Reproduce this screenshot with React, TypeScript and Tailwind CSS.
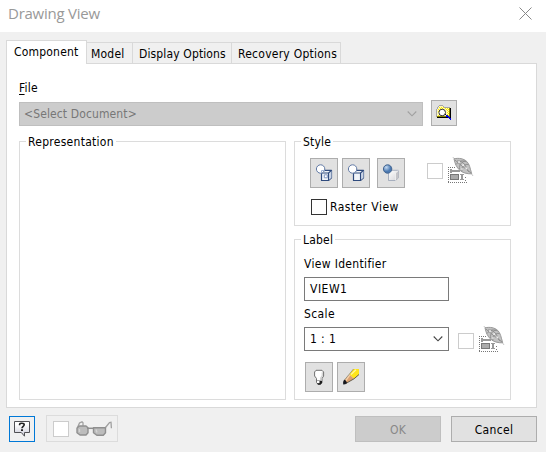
import type { ReactNode } from 'react';

function Group({ title, className, titleClass = 'tracking-[0.2px]', children }: { title: string; className: string; titleClass?: string; children?: ReactNode }) {
  return (
    <fieldset className={`min-w-0 border border-[#dcdcdc] ${className}`}>
      <legend className={`ml-[6px] h-4 px-[2px] leading-[18px] ${titleClass}`}>{title}</legend>
      {children}
    </fieldset>
  );
}

function ToolButton({ label, className, children }: { label: string; className: string; children: ReactNode }) {
  return (
    <button aria-label={label} className={`flex shrink-0 items-center justify-center border border-[#adadad] bg-[#e1e1e1] ${className}`}>
      {children}
    </button>
  );
}

function Check({ disabled = false }: { disabled?: boolean }) {
  return <span role="checkbox" aria-checked="false" className={`size-4 shrink-0 border bg-white ${disabled ? 'border-[#cccccc]' : 'border-[#333333]'}`} />;
}

function Chevron({ color }: { color: string }) {
  return (
    <svg width="10" height="6" viewBox="0 0 10 6" fill="none" stroke={color} strokeWidth="1.1">
      <path d="M.7.5 5 4.8 9.3.5" />
    </svg>
  );
}

function BrowseIcon() {
  return (
    <svg width="16" height="16" viewBox="0 0 16 16" shapeRendering="crispEdges">
      <path d="M1 3h2V1h5v1h6v10H1z" fill="#fff9b8" />
      <path d="M3 2h1v1H3zm2 0h1v1H5zm2 0h1v1H7zM4 3h1v1H4zm2 0h1v1H6zm3 0h1v1H9zm2 0h1v1h-1zm-1 1h1v1h-1zm2 0h1v1h-1zm-1 1h1v1h-1zm1 1h1v1h-1zm-1 1h1v1h-1zm1 1h1v1h-1zm-1 1h1v1h-1zm1 1h1v1h-1zM2 4h1v1H2zm0 2h1v1H2zm0 4h1v1H2zm2 1h1v1H4z" fill="#ffee00" />
      <path d="M0 12V4h1V2h1V1h1V0h4v1h1v1h6v1H8V2H7V1H3v1H2v2H1v8z" fill="#a5a5a5" />
      <path d="M13 3h1v9h-1zM1 11h12v1H1z" fill="#8b8600" />
      <path d="M14 3h1v10H1v-1h13z" fill="#000" />
      <circle cx="6.2" cy="7.5" r="3.3" fill="#fff" stroke="#333" shapeRendering="auto" />
      <path d="M9 9h1v1H9z" fill="#111" />
      <path d="M10 10h2v1h1v1h1v1h1v2h-1v-1h-1v-1h-1v-1h-2z" fill="#0000e8" />
    </svg>
  );
}

function StyleIcon({ hidden = false, shaded = false }: { hidden?: boolean; shaded?: boolean }) {
  const edge = shaded ? '#8d98ae' : '#2f4a7d';
  return (
    <svg width="18" height="18" viewBox="0 0 18 18">
      <defs>
        <radialGradient id="ball" cx="35%" cy="30%">
          <stop offset="0" stopColor="#c4daf2" />
          <stop offset="1" stopColor="#4b79b1" />
        </radialGradient>
        <linearGradient id="box" x2="1" y2="1">
          <stop stopColor="#fff" />
          <stop offset="1" stopColor="#d4d4d8" />
        </linearGradient>
      </defs>
      <path d="M6.5 8.5 9 6.3h7.5v7.5l-3 2.7h-7z" fill={shaded ? 'url(#box)' : '#f1f4f9'} stroke={edge} strokeWidth={shaded ? 0.7 : 1.2} strokeLinejoin="round" />
      <path d="M13.5 9v7.3l3-2.6V6.5z" fill={shaded ? '#c4c4c8' : '#cbd5e6'} />
      <path d="M6.5 9h7v7.5m0-7.5 3-2.6" fill="none" stroke={shaded ? '#f3f3f3' : edge} strokeWidth={shaded ? 0.8 : 1.1} />
      {hidden && <path d="M9.3 10.8v3h3v-3z" fill="#fff" stroke="#8298c2" />}
      <circle cx="5.6" cy="5" r="4.2" fill={shaded ? 'url(#ball)' : '#fff'} stroke={shaded ? '#43648f' : '#6079a5'} />
      {hidden && <path d="M6.5 9V6.5h3" fill="none" stroke="#9eb1d2" />}
    </svg>
  );
}

function InheritIcon() {
  return (
    <svg width="26" height="27" viewBox="0 0 26 27" className="shrink-0">
      <g fill="none" stroke="#777" strokeDasharray="1 1" shapeRendering="crispEdges">
        <path d="M0 10.5h7M0 25.5h19M.5 10v16M17 20.5h2M17 23.5h2" />
      </g>
      <g shapeRendering="crispEdges">
        <path d="M2 12h2v1h8v2H4v1H2z" fill="#999" />
        <rect x="2.5" y="17.5" width="8" height="5" fill="#aaa" stroke="#777" />
        <path d="M12 17h4v1h-1v4h1v1h-4v-1h1v-4h-1z" fill="#999" />
      </g>
      <path d="M4.8 0 6.5 2M23 16l2 3" stroke="#c8c8c8" />
      <path d="M6 1.8C11 .8 15.5 1.5 18.8 4.5 21.5 7 22 11 23.7 16.8 19 17 14.5 15.8 11.8 13.2 8.5 10.3 7 7 6 1.8z" fill="#c2c2c2" stroke="#9a9a9a" />
      <path d="M7 3c4 4 11 9 16 13M8 7.5c3-4 7-4.5 10.5-2.5M11.5 12c-.5-4 2-7.5 6-8M14 14.5c-1-4 2-8 6.5-7M9 4c3-.5 6 1 8 4s2 5 4 7" fill="none" stroke="#8b8b8b" strokeWidth=".9" />
      <path d="M10 4.2h2v1.6h-2zm4.3 3h1.8V9h-1.8zm3.2 3.4h1.8v1.8h-1.8zm-4.4.6h1.5v1.6h-1.5z" fill="#ececec" />
    </svg>
  );
}

function BulbIcon() {
  return (
    <svg width="12" height="17" viewBox="0 0 12 17">
      <path d="M3 1.3h6L10.6 3v4L9 9.5v4L7.7 15H4.8l-1.3-1.5v-4L1.6 7V3z" fill="#fff" stroke="#707070" strokeLinejoin="round" />
      <path d="M9.3 3.2v3.5L7.6 9.3v2" fill="none" stroke="#d2d2d2" strokeWidth="1.3" />
      <path d="M4 11.5h4.5" stroke="#aaa" />
      <path d="M6.5 12H9v2l-1.6 1.8H5L4 14.3h2.5z" fill="#1d1d1d" />
    </svg>
  );
}

function PencilIcon() {
  return (
    <svg width="18" height="18" viewBox="0 0 18 18">
      <path d="M11.5 1H17v5.5l-5 4.3-4.7-4.4z" fill="#ffe51a" />
      <path d="m7.3 6.4 4.7 4.4L4 15.2 2 12.8z" fill="#dba06f" />
      <path d="M7.7 7.2 3.5 13" fill="none" stroke="#f7d1a8" strokeWidth="1.3" />
      <path d="M17 6.5 12 10.8 4 15.4" fill="none" stroke="#5b5442" strokeWidth=".9" />
      <path d="M11.5 1 7.2 6.3 2 12.5" fill="none" stroke="#8e8874" strokeWidth=".8" />
      <path d="m9 6.5 5-4.8" stroke="#fff9a0" strokeWidth="1.2" />
      <path d="m2.2 11.8 1.6.7 1.3 2.4-1.8 1.3-2.1.2-.1-2.3z" fill="#16181f" />
    </svg>
  );
}

function HelpIcon() {
  return (
    <svg width="18" height="18" viewBox="0 0 18 18">
      <defs>
        <linearGradient id="bubble" x2="0" y2="1">
          <stop offset=".2" stopColor="#fff" />
          <stop offset="1" stopColor="#c9c9d6" />
        </linearGradient>
      </defs>
      <path d="M1.5 1.5h15v11h-5v3.7l-3.2-3.7H1.5z" fill="url(#bubble)" stroke="#505054" />
      <path d="M6.6 5.2V4.4c0-.8.8-1.2 2.2-1.2s2.4.5 2.4 1.6C11.2 6.3 9 6.4 9 8.2" fill="none" stroke="#222" strokeWidth="1.6" />
      <path d="M8 9.3h2v1.8H8z" fill="#222" />
    </svg>
  );
}

function GlassesIcon() {
  return (
    <svg width="36" height="16" viewBox="0 0 36 16">
      <path d="M1.5 6.5 3.5 2 6 .8l1 1v3M29.5 6.5l4-5 1.5-.3.4 6" fill="none" stroke="#a0a0a0" strokeWidth="1.3" />
      <path d="M1 7 3.5 5H10l2 1.7v5L10 14H4L1 11.8zM17.5 6.7h12v5L27.3 14.2h-6.5l-3.3-2.5z" fill="#bcbcbc" stroke="#8f8f8f" strokeWidth="1.4" strokeLinejoin="round" />
      <path d="M11 7.3h7" stroke="#8e8e8e" strokeWidth="1.5" />
      <path d="M3.5 8v3M20 8.5l1 3" stroke="#d4d4d4" strokeWidth="1.3" />
    </svg>
  );
}

export default function App() {
  return (
    <div className="flex h-[452px] w-[546px] flex-col overflow-hidden bg-[#f0f0f0] font-['DejaVu_Sans_Condensed','DejaVu_Sans',sans-serif] text-[12px] leading-4 tracking-[0.2px] text-black">
      <header className="flex h-8 shrink-0 items-start justify-between bg-white pr-[14px] pl-[8px] font-['Open_Sans',sans-serif] text-[15px] tracking-[-0.25px] text-[#999999]">
        <h1 className="mt-[2px] leading-[22px]">Drawing View</h1>
        <svg className="mt-[7px]" width="13" height="13" viewBox="0 0 13 13" stroke="#888">
          <path d="m.5.5 12 12m0-12-12 12" />
        </svg>
      </header>

      <nav className="mt-2 ml-[6px] flex h-6 shrink-0 items-end whitespace-nowrap">
        <div className="z-10 h-6 w-[81px] border border-b-0 border-[#d9d9d9] bg-white pt-[3px] pl-[7px]">Component</div>
        <div className="h-[22px] w-[46px] border-t border-r border-[#d9d9d9] pt-[3px] pl-1">Model</div>
        <div className="h-[22px] w-[99px] border-t border-r border-[#d9d9d9] pt-[3px] pl-[6px] tracking-[0.13px]">Display Options</div>
        <div className="h-[22px] w-[109px] border-t border-r border-[#d9d9d9] pt-[3px] pl-[6px] tracking-[0.25px]">Recovery Options</div>
      </nav>

      <main className="-mt-px ml-[6px] h-[345px] w-[531px] shrink-0 border border-[#d9d9d9] bg-white pt-4 pl-3">
        <div className="h-[20px]"><span className="underline underline-offset-2">F</span>ile</div>
        <div className="flex h-[26px] items-center gap-2">
          <div className="mt-px flex h-[24px] w-[404px] items-center justify-between border border-[#bfbfbf] bg-[#cccccc] pr-[5px] pl-1 tracking-[0.12px] text-[#777777]">
            <span>&lt;Select Document&gt;</span>
            <Chevron color="#a0a0a0" />
          </div>
          <ToolButton label="Browse" className="size-[26px]"><BrowseIcon /></ToolButton>
        </div>

        <div className="mt-[7px] flex gap-2">
          <Group title="Representation" className="h-[267px] w-[267px]" titleClass="tracking-[0.28px]" />
          <div className="flex flex-col gap-[5px]">
            <Group title="Style" className="h-[93px] w-[217px]">
              <div className="mt-[9px] flex items-start pl-[15px]">
                <ToolButton label="Hidden line" className="h-[30px] w-7"><StyleIcon hidden /></ToolButton>
                <ToolButton label="Hidden line removed" className="ml-1 h-[30px] w-7"><StyleIcon /></ToolButton>
                <ToolButton label="Shaded" className="ml-[7px] h-[30px] w-7"><StyleIcon shaded /></ToolButton>
                <div className="-mt-px ml-[22px] flex items-center gap-[5px]">
                  <Check disabled />
                  <InheritIcon />
                </div>
              </div>
              <label className="mt-[11px] flex items-center gap-[3px] pl-4 tracking-[0.45px]"><Check />Raster View</label>
            </Group>
            <Group title="Label" className="h-[169px] w-[217px]">
              <div className="pt-[9px] pl-[9px]">
                <div className="h-[21px] tracking-[0.33px]">View Identifier</div>
                <div className="flex h-6 w-[145px] items-center border border-[#7a7a7a] pl-[5px] tracking-[0.5px]">VIEW1</div>
                <div className="mt-[5px] h-[20px] tracking-[0.4px]">Scale</div>
                <div className="flex h-[25px] items-start">
                  <div className="mt-px flex h-6 w-[145px] items-center justify-between border border-[#7a7a7a] pr-[5px] pl-[5px]">
                    <span className="tracking-[0.4px]">1 : 1</span><Chevron color="#444" />
                  </div>
                  <div className="ml-[9px] flex items-center gap-[5px]">
                    <span className="mt-[3px] flex"><Check disabled /></span>
                    <InheritIcon />
                  </div>
                </div>
                <div className="mt-[11px] flex gap-1 pl-px">
                  <ToolButton label="Toggle label visibility" className="h-[30px] w-7"><BulbIcon /></ToolButton>
                  <ToolButton label="Edit label" className="h-[30px] w-7"><PencilIcon /></ToolButton>
                </div>
              </div>
            </Group>
          </div>
        </div>
      </main>

      <footer className="flex items-start pt-2 pl-[9px]">
        <button aria-label="Help" className="flex size-[26px] items-center justify-center border border-[#0078d7]"><HelpIcon /></button>
        <div className="-mt-px ml-[11px] flex h-[27px] w-[72px] items-center gap-[7px] border border-[#dcdcdc] pl-[6px]">
          <Check disabled />
          <GlassesIcon />
        </div>
        <button className="ml-[237px] h-[26px] w-[86px] border border-[#bfbfbf] bg-[#cccccc] pt-px text-[#888888]">OK</button>
        <button className="ml-[10px] h-[26px] w-[86px] border border-[#adadad] bg-[#e1e1e1] pt-px tracking-[0.35px]">Cancel</button>
      </footer>
    </div>
  );
}
